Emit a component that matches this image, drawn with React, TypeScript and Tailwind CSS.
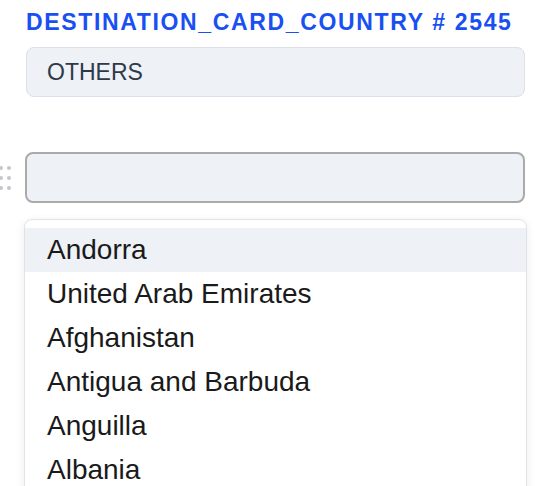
const countries = [
  'Andorra',
  'United Arab Emirates',
  'Afghanistan',
  'Antigua and Barbuda',
  'Anguilla',
  'Albania',
  'Armenia',
];

function DragHandle() {
  return (
    <div className="w-[26px] shrink-0 -ml-px">
      <div className="grid grid-cols-2 gap-x-[4px] gap-y-[6px] w-[12px]">
        {Array.from({ length: 6 }).map((_, i) => (
          <span key={i} className="block w-[4px] h-[4px] rounded-full bg-[#c4c7cc]" />
        ))}
      </div>
    </div>
  );
}

export default function App() {
  return (
    <div
      className="w-[550px] h-[486px] overflow-hidden bg-white"
      style={{ fontFamily: '"Liberation Sans", Arial, sans-serif' }}
    >
      <div className="pl-[26px] pr-[25px]">
        <div className="pt-[9px] h-[36px] leading-[26px] text-[23px] font-bold tracking-[1.65px] text-[#1a4ff2] whitespace-nowrap">
          DESTINATION_CARD_COUNTRY # 2545
        </div>

        <div className="mt-[11px] h-[50px] flex items-center px-[20px] rounded-[8px] border border-[#dbe1e9] bg-[#eef1f6] text-[23px] text-[#2d3a4a]">
          OTHERS
        </div>
      </div>

      <div className="mt-[55px] flex items-center pr-[25px]">
        <DragHandle />
        <div className="flex-1 h-[51px] rounded-[8px] border-2 border-[#aaaaaa] bg-[#eef1f6]" />
      </div>

      <div className="mt-[16px] ml-[24px] mr-[23px] rounded-t-[8px] border border-[#e3e3e3] bg-white pt-[8px] shadow-[0_2px_10px_rgba(0,0,0,0.08)]">
        {countries.map((c, i) => (
          <div
            key={c}
            className={`h-[44px] leading-[44px] px-[22px] text-[28px] text-[#1a1a1a] whitespace-nowrap ${
              i === 0 ? 'bg-[#eef1f6]' : ''
            }`}
          >
            {c}
          </div>
        ))}
      </div>
    </div>
  );
}
